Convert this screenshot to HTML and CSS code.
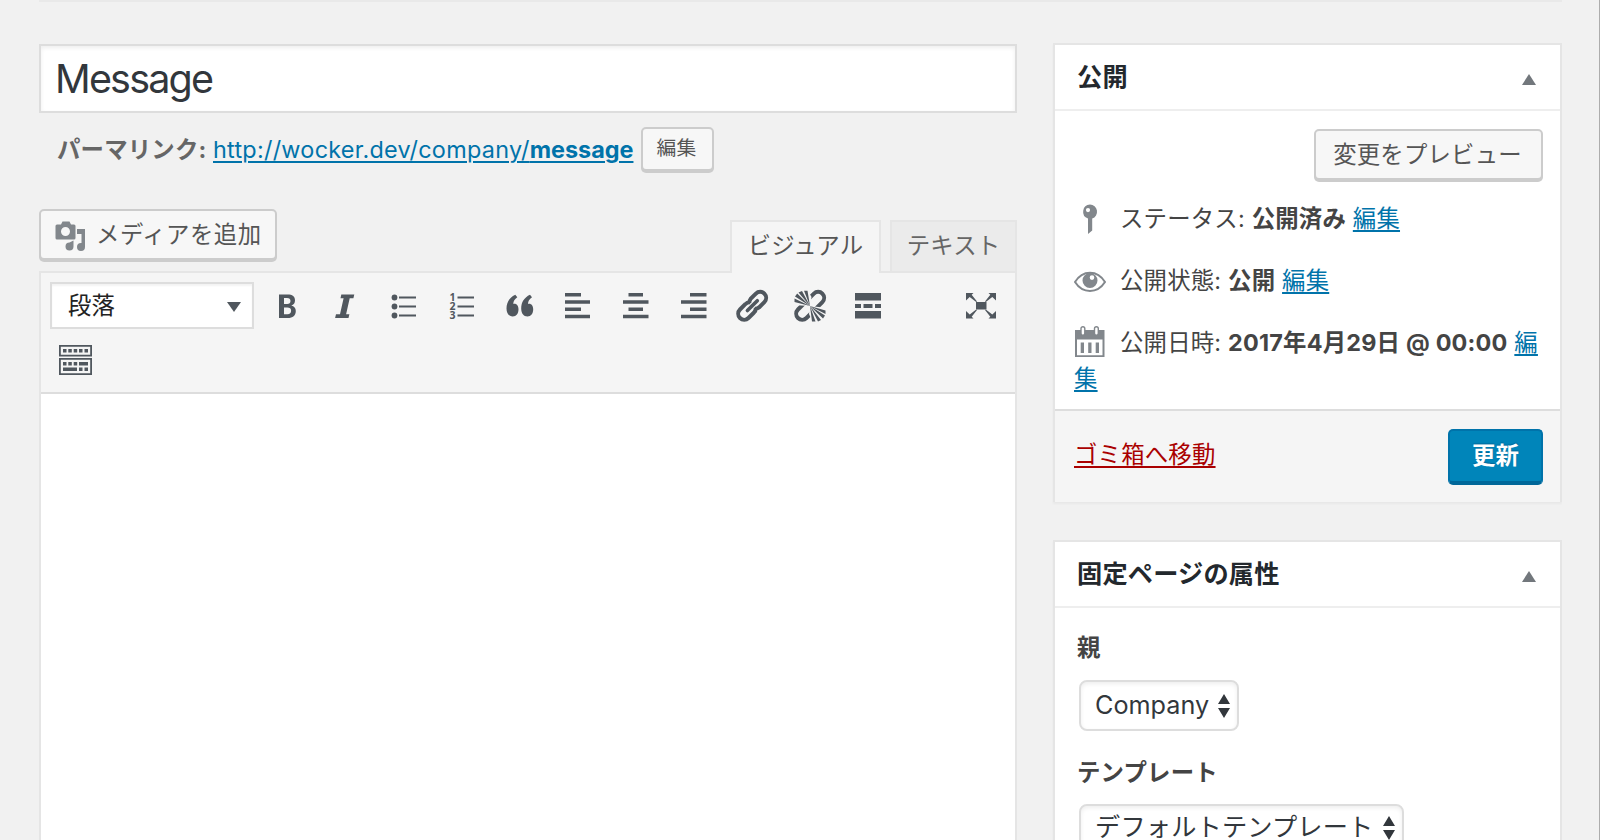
FILE: index.html
```html
<!DOCTYPE html>
<html lang="ja">
<head>
<meta charset="utf-8">
<title>Message</title>
<link rel="stylesheet" href="styles.css">
</head>
<body>
<div class="wrap">
  <main class="main">
    <div class="title-field"><span class="title-text">Message</span></div>
    <div class="permalink">
      <strong class="permalink-label">パーマリンク:</strong>
      <a class="permalink-url" href="#">http://wocker.dev/company/<b>message</b></a>
      <button class="button button-small">編集</button>
    </div>
    <div class="editor-head">
      <button class="button media-button">
        <svg class="icon-media" viewBox="0 0 32 32"><path fill-rule="evenodd" d="M2 4.500h5l1.500-3h7l1.500 3h3a1.500 1.500 0 0 1 1.500 1.500v12a1.500 1.500 0 0 1-1.500 1.500H3A1.500 1.500 0 0 1 1.500 18V6A1.500 1.500 0 0 1 3 4.500zM11.500 7a4.500 4.500 0 1 0 0 9 4.500 4.500 0 0 0 0-9z"/><path d="M23 9h8v18a4 4 0 1 1-4-4h.5v-9H23zM19.500 20.500v6a4 4 0 1 1-4-4z"/></svg>
        <span>メディアを追加</span>
      </button>
      <div class="tabs">
        <div class="tab tab-active">ビジュアル</div>
        <div class="tab">テキスト</div>
      </div>
    </div>
    <div class="editor">
      <div class="toolbar">
        <div class="toolbar-row">
          <div class="format-select"><span>段落</span><svg viewBox="0 0 14 10"><path d="M0 0h14L7 10z"/></svg></div>
          <div class="tools">
            <svg class="tool" viewBox="0 0 36 36"><path fill-rule="evenodd" d="M9 6.500h8.500c5 0 7.500 2 7.500 5.700 0 2.800-1.300 4.600-3.700 5.200 2.900.6 4.500 2.600 4.500 5.500 0 4.400-3 7-8 7H9zM14 10v6h3.200c2.200 0 3.300-1 3.300-3s-1.200-3-3.500-3zm0 9.500v6.800h3.500c2.400 0 3.600-1.200 3.600-3.500s-1.300-3.300-3.800-3.300z"/></svg>
            <svg class="tool" viewBox="0 0 36 36"><path d="M13.300 6.500h13l-.9 3.700h-3.700l-3.600 16.100h3.300l-.9 3.700H7.100l.9-3.700h4l3.600-16.100h-3.100z"/></svg>
            <svg class="tool" viewBox="0 0 36 36"><circle cx="8.500" cy="9.500" r="2.900"/><circle cx="8.500" cy="18.500" r="2.900"/><circle cx="8.500" cy="27.500" r="2.900"/><path d="M13 8.500h17v2H13zM13 17.500h17v2H13zM13 26.500h17v2H13z"/></svg>
            <svg class="tool" viewBox="0 0 36 36"><path d="M13.500 8.500H30v2H13.500zM13.500 17.500H30v2H13.500zM13.500 26.500H30v2H13.500z"/><text class="tool-digit" x="5.500" y="12.500">1</text><text class="tool-digit" x="5.500" y="21.700">2</text><text class="tool-digit" x="5.500" y="30.900">3</text></svg>
            <svg class="tool" viewBox="0 0 36 36"><path d="M13.300 6.800l2 2.500c-2.600 1.700-4 4-4 6.700 2.700-1 5.200 1.300 5.200 5.300 0 4.200-2.200 7.200-5.700 7.200-3.900 0-6.300-3.100-6.300-8 0-6.200 3-11 8.800-13.700z"/><path d="M28 6.800l2 2.500c-2.600 1.700-4 4-4 6.700 2.700-1 5.200 1.300 5.200 5.300 0 4.200-2.200 7.200-5.700 7.200-3.900 0-6.300-3.100-6.300-8 0-6.200 3-11 8.800-13.700z"/></svg>
            <svg class="tool" viewBox="0 0 36 36"><path d="M5 5h16v3.500H5zM5 12.300h25v3.500H5zM5 19.500h16V23H5zM5 26.700h25v3.500H5z"/></svg>
            <svg class="tool" viewBox="0 0 36 36"><path d="M10.500 5h14.500v3.500H10.500zM5 12.300h25.500v3.500H5zM10.500 19.500h14.500V23H10.500zM5 26.700h25.500v3.500H5z"/></svg>
            <svg class="tool" viewBox="0 0 36 36"><path d="M14 5h16.500v3.500H14zM5 12.300h25.500v3.500H5zM14 19.500h16.500V23H14zM5 26.700h25.500v3.500H5z"/></svg>
            <svg class="tool" viewBox="0 0 36 36"><g transform="rotate(-45 18 18)" fill="none" stroke="#50575e" stroke-width="4"><path d="M19.500 14.200A6 6 0 0 0 14.500 12H7a6 6 0 0 0 0 12h7.500a6 6 0 0 0 5-2.200M18 14.200a6 6 0 0 1 4-2.200h7.500a6 6 0 0 1 0 12H22a6 6 0 0 1-4-2.200"/><path d="M11.500 18h14" stroke-width="3.600" stroke-linecap="round"/></g></svg>
            <svg class="tool" viewBox="0 0 36 36"><g transform="rotate(-45 18 18)" fill="none" stroke="#50575e" stroke-width="4"><path d="M15.500 24H7a6 6 0 0 1 0-12h8.500M21 12h8.500a6 6 0 0 1 0 12H21"/></g><path fill="#f5f5f5" d="M18 18L1 17 1 3 15 1l4.500 8zM18 18l17 2-1 14-13 1-4-9z"/><path d="M18 18L2.500 14V10.500zM18 18L3 8.500l2.200-3zM18 18L6.500 4.500 10 3zM18 18L12 2.800h3.500zM18 18l15.500 4.500v3.500zM18 18l15 9.500-2 3zM18 18l11 14-3 1.500zM18 18l5.500 15.500H20z"/></svg>
            <svg class="tool" viewBox="0 0 36 36"><path d="M5 5h26v7.500H5zM5 23h26v7.500H5zM5 16h6v4H5zM13.500 16h9v4h-9zM25 16h6v4h-6z"/></svg>
          </div>
          <svg class="tool-full" viewBox="0 0 36 36"><path d="M13 14h10.500v7.500H13z"/><path d="M3 5h7.500L8.700 6.800 14 13.500l-.8.600L6.700 8.900 3 12.500zM33 5h-7.500l1.800 1.800-5.300 6.700.8.600 6.500-5.200 3.700 3.600zM3 30.500h7.500l-1.800-1.800 5.300-6.700-.8-.6-6.500 5.200L3 23zM33 30.500h-7.500l1.800-1.800-5.300-6.700.8-.6 6.500 5.200L33 23z"/></svg>
        </div>
        <svg class="tool-sink" viewBox="0 0 34 30"><path fill="none" stroke="#50575e" stroke-width="1.800" d="M.9.900h31.200v9.700H.9zM.9 13.800h31.200v15.300H.9z"/><path d="M4 4h3.500v3.500H4zM9.300 4h3.500v3.500H9.300zM14.700 4h3.500v3.500h-3.500zM20 4h3.500v3.500H20zM25.500 4H29v3.500h-3.500zM4 17h3.500v3.500H4zM9.300 17h3.500v3.500H9.300zM14.700 17h3.500v3.500h-3.500zM20 17h9v3.500h-9zM4 22.500h14V26H4zM20 22.500h3.500V26H20zM25.500 22.500H29V26h-3.500z"/></svg>
      </div>
    </div>
  </main>
  <aside class="side">
    <section class="box publish">
      <header class="box-head"><h2>公開</h2><svg viewBox="0 0 14 11"><path d="M7 0l7 11H0z"/></svg></header>
      <div class="preview"><button class="button preview-button">変更をプレビュー</button></div>
      <div class="misc">
        <p class="misc-row"><svg class="misc-icon" viewBox="0 0 36 36"><path fill-rule="evenodd" d="M18 4.500a7.200 7.200 0 0 1 2.200 14V30.500L16 34V18.500A7.200 7.200 0 0 1 18 4.500zm-2 3.500a2.100 2.100 0 1 0 0 4.200 2.100 2.100 0 0 0 0-4.200z"/></svg>ステータス: <b>公開済み</b> <a href="#">編集</a></p>
        <p class="misc-row"><svg class="misc-icon" viewBox="0 0 36 36"><path fill="none" stroke="#82878c" stroke-width="2" d="M3 20C7 13.500 12 10.700 18 10.700S29 13.500 33 20c-4 6.200-9 9-15 9S7 26.200 3 20z"/><path fill-rule="evenodd" d="M18 11a7.400 7.400 0 1 1 0 15 7.400 7.400 0 0 1 0-15zm2 2.300a2.300 2.300 0 1 0 0 4.600 2.300 2.300 0 0 0 0-4.600z"/></svg>公開状態: <b>公開</b> <a href="#">編集</a></p>
        <p class="misc-row"><svg class="misc-icon" viewBox="0 0 36 36"><path fill-rule="evenodd" d="M3 6h29.500v27H3zM5 15.500V31.200h25.500V15.500z"/><path d="M8.700 18.500h3.300v10.500H8.700zM16.200 18.500h3.300v10.500h-3.300zM23.700 18.500H27v10.500h-3.300z"/><rect x="9" y="2.700" width="3.800" height="8.500" rx="1.900" fill="#fff" stroke="#82878c" stroke-width="1.400"/><rect x="22.500" y="2.700" width="3.800" height="8.500" rx="1.900" fill="#fff" stroke="#82878c" stroke-width="1.400"/></svg>公開日時: <b>2017年4月29日 @ 00:00</b> <a href="#">編集</a></p>
      </div>
      <footer class="actions"><a class="trash" href="#">ゴミ箱へ移動</a><button class="button-primary">更新</button></footer>
    </section>
    <section class="box attributes">
      <header class="box-head"><h2>固定ページの属性</h2><svg viewBox="0 0 14 11"><path d="M7 0l7 11H0z"/></svg></header>
      <div class="fields">
        <div class="label">親</div>
        <div class="select select-parent"><span>Company</span><svg viewBox="0 0 12 24"><path d="M6 0l6 10H0zM0 14h12L6 24z"/></svg></div>
        <div class="label">テンプレート</div>
        <div class="select select-template"><span>デフォルトテンプレート</span><svg viewBox="0 0 12 24"><path d="M6 0l6 10H0zM0 14h12L6 24z"/></svg></div>
      </div>
    </section>
  </aside>
</div>
</body>
</html>
```
FILE: styles.css
```css
* { box-sizing: border-box; }

body {
  margin: 0;
  height: 840px;
  overflow: hidden;
  background: #f1f1f1;
  border-right: 1px solid #adadad;
  color: #444;
  font-family: Inter, "Noto Sans CJK JP", sans-serif;
  font-size: 23.4px;
  line-height: 36px;
  letter-spacing: .2px;
}

button { font-family: inherit; letter-spacing: inherit; padding: 0; }
a { color: #0073aa; text-decoration: underline; text-decoration-thickness: 2px; text-underline-offset: 3px; }
svg { display: block; fill: #50575e; flex: none; }

.wrap {
  display: flex;
  gap: 36px;
  width: 1523px;
  height: 840px;
  overflow: hidden;
  margin-left: 39px;
  border-top: 2px solid #e9e9e9;
  padding-top: 42px;
}
.main { width: 978px; flex: none; }
.side { width: 509px; flex: none; margin-top: -1px; }

.title-field {
  height: 69px;
  border: 2px solid #ddd;
  background: #fff;
  box-shadow: inset 0 2px 4px rgba(0, 0, 0, .07);
  padding-left: 14px;
  color: #32373c;
  font-size: 39.5px;
  line-height: 66px;
}
.title-text { letter-spacing: -1.8px; }

.permalink {
  display: flex;
  align-items: center;
  height: 46px;
  margin-top: 14px;
  padding-left: 18px;
  white-space: nowrap;
}
.permalink-label { width: 156px; color: #666; }
.permalink-url { width: 428px; letter-spacing: .27px; }
.permalink-url b { letter-spacing: 0; }

.button {
  border: 2px solid #ccc;
  border-radius: 5px;
  background: #f7f7f7;
  box-shadow: 0 2px 0 #ccc;
  color: #555;
  font-size: 23.4px;
  line-height: 1;
  white-space: nowrap;
}
.button-small { width: 73px; height: 44px; font-size: 19.8px; padding-right: 2px; margin-bottom: 2px; }

.editor-head {
  display: flex;
  justify-content: space-between;
  height: 62px;
  margin-top: 36px;
}
.media-button { display: flex; align-items: center; gap: 10px; width: 238px; height: 51px; padding-left: 13px; }
.media-button span { padding-top: 1px; letter-spacing: .5px; }
.icon-media { width: 32px; height: 32px; margin-top: 3px; fill: #82878c; }

.tabs { display: flex; gap: 9px; padding-top: 11px; }
.tab {
  width: 127px;
  height: 51px;
  border: 2px solid #e5e5e5;
  border-bottom: 0;
  background: #ebebeb;
  color: #666;
  text-align: center;
  line-height: 47px;
}
.tab-active { position: relative; width: 151px; height: 53px; background: #f5f5f5; color: #555; }

.editor { height: 600px; border: 2px solid #e5e5e5; background: #fff; }
.toolbar { height: 121px; border-bottom: 2px solid #ddd; background: #f5f5f5; padding: 9px 17px 0 9px; }
.toolbar-row { display: flex; align-items: center; height: 47px; }
.format-select {
  display: flex;
  align-items: center;
  justify-content: space-between;
  width: 204px;
  height: 47px;
  border: 2px solid #ddd;
  background: #fff;
  box-shadow: inset 0 2px 2px rgba(0, 0, 0, .05);
  padding: 0 11px 0 16px;
  color: #222;
}
.format-select svg { width: 14px; height: 10px; margin-top: 3px; }
.tools { display: flex; gap: 22.1px; margin-left: 15.5px; }
.tool, .tool-full { width: 36px; height: 36px; }
.tool-full { margin-left: auto; margin-right: -1px; }
.tool-digit { font: 700 10.5px "Open Sans", sans-serif; letter-spacing: 0; }
.tool-sink { width: 34px; height: 30px; margin: 16px 0 0 9px; }

.box { border: 2px solid #e5e5e5; background: #fff; box-shadow: 0 2px 2px rgba(0, 0, 0, .04); }
.box-head {
  display: flex;
  align-items: center;
  justify-content: space-between;
  height: 66px;
  border-bottom: 2px solid #eee;
  padding: 0 24px 0 22px;
}
.box-head h2 { margin: 0; color: #23282d; font-size: 25.2px; font-weight: 700; line-height: 60px; }
.box-head svg { width: 14px; height: 11px; margin-top: 5px; fill: #72777c; }

.publish { height: 459px; }
.preview { display: flex; justify-content: flex-end; padding: 18px 17px 0 0; }
.preview-button { width: 229px; height: 51px; padding-right: 2px; }
.misc { height: 229px; padding: 21px 15px 0 19px; }
.misc-row { margin: 0 0 26px; white-space: normal; word-break: break-all; }
.misc-icon { float: left; width: 36px; height: 36px; margin: -1px 12px 0 -2px; fill: #82878c; }
.misc-row b { color: #444; }

.actions {
  display: flex;
  justify-content: space-between;
  height: 93px;
  border-top: 2px solid #ddd;
  background: #f5f5f5;
  padding: 18px 17px 0 19px;
}
.trash { color: #a00; line-height: 52px; }
.button-primary {
  width: 95px;
  height: 56px;
  border: 2px solid #0073aa;
  border-bottom: 4px solid #006799;
  border-radius: 5px;
  background: #0085ba;
  color: #fff;
  font-size: 23.4px;
  font-weight: 700;
  line-height: 1;
  text-shadow: 0 -1px 1px #006799;
}

.attributes { height: 400px; margin-top: 38px; }
.fields { padding: 22px 22px 0; }
.label { height: 36px; font-weight: 700; }
.select {
  display: flex;
  align-items: center;
  justify-content: space-between;
  height: 51px;
  border: 2px solid #ddd;
  border-radius: 8px;
  background: #fff;
  box-shadow: inset 0 2px 4px rgba(0, 0, 0, .07);
  margin: 14px 0 24px 2px;
  padding: 0 7px 2px 14px;
  color: #32373c;
  font-size: 25.2px;
  letter-spacing: 0;
  white-space: nowrap;
}
.select svg { width: 12px; height: 24px; margin-top: 2px; fill: #32373c; }
.select-parent { width: 160px; }
.select-template { width: 325px; margin-top: 13px; padding-bottom: 5px; letter-spacing: .2px; }
```
